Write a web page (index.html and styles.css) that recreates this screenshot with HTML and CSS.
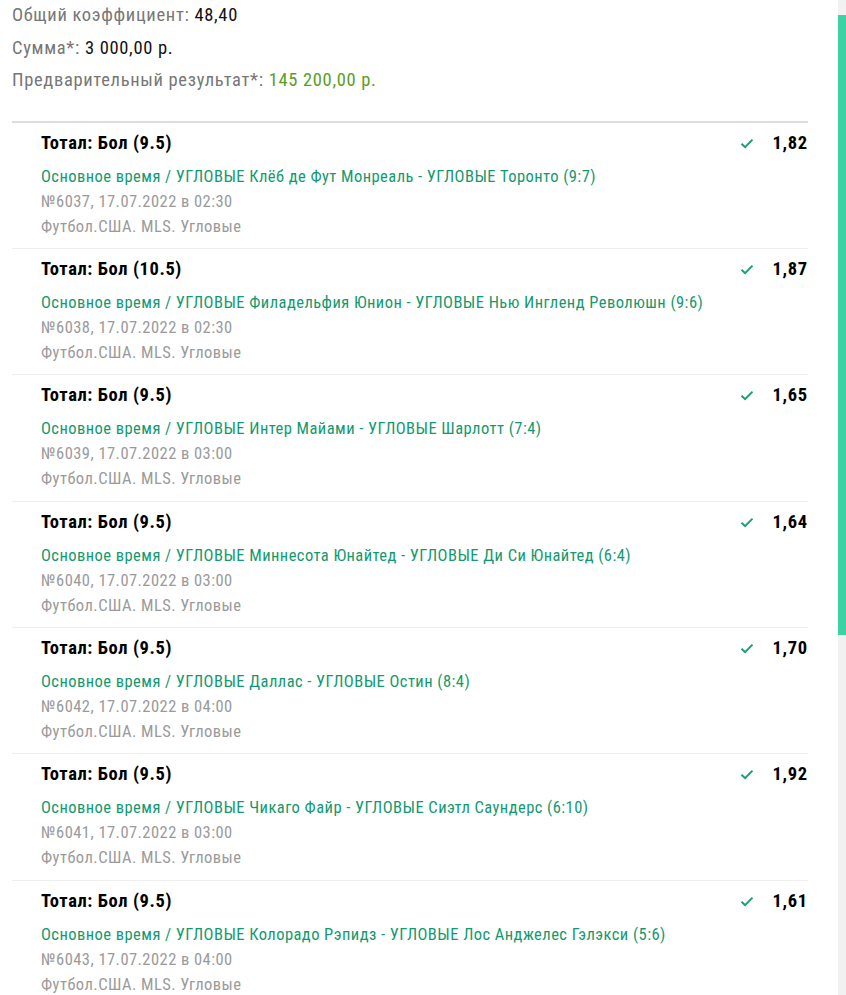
FILE: index.html
```html
<!DOCTYPE html>
<html lang="ru">
<head>
  <meta charset="UTF-8">
  <meta name="viewport" content="width=device-width, initial-scale=1.0">
  <title>Купон</title>
  <link rel="stylesheet" href="styles.css">
</head>
<body>
  <div class="coupon">
    <div class="summary">
      <div class="summary-line">Общий коэффициент: <span class="value">48,40</span></div>
      <div class="summary-line">Сумма*: <span class="value">3 000,00 р.</span></div>
      <div class="summary-line">Предварительный результат*: <span class="value win">145 200,00 р.</span></div>
    </div>

    <ul class="bets">
      <li class="bet">
        <div class="bet-head">
          <span class="bet-title">Тотал: Бол (9.5)</span>
          <span class="bet-odds"><svg class="check" viewBox="0 0 14 11"><path d="M1.5 5.8l3.6 3.4L12.5 1.6"/></svg>1,82</span>
        </div>
        <div class="bet-event">Основное время / УГЛОВЫЕ Клёб де Фут Монреаль - УГЛОВЫЕ Торонто (9:7)</div>
        <div class="bet-meta">№6037, 17.07.2022 в 02:30</div>
        <div class="bet-meta">Футбол.США. MLS. Угловые</div>
      </li>
      <li class="bet">
        <div class="bet-head">
          <span class="bet-title">Тотал: Бол (10.5)</span>
          <span class="bet-odds"><svg class="check" viewBox="0 0 14 11"><path d="M1.5 5.8l3.6 3.4L12.5 1.6"/></svg>1,87</span>
        </div>
        <div class="bet-event">Основное время / УГЛОВЫЕ Филадельфия Юнион - УГЛОВЫЕ Нью Ингленд Революшн (9:6)</div>
        <div class="bet-meta">№6038, 17.07.2022 в 02:30</div>
        <div class="bet-meta">Футбол.США. MLS. Угловые</div>
      </li>
      <li class="bet">
        <div class="bet-head">
          <span class="bet-title">Тотал: Бол (9.5)</span>
          <span class="bet-odds"><svg class="check" viewBox="0 0 14 11"><path d="M1.5 5.8l3.6 3.4L12.5 1.6"/></svg>1,65</span>
        </div>
        <div class="bet-event">Основное время / УГЛОВЫЕ Интер Майами - УГЛОВЫЕ Шарлотт (7:4)</div>
        <div class="bet-meta">№6039, 17.07.2022 в 03:00</div>
        <div class="bet-meta">Футбол.США. MLS. Угловые</div>
      </li>
      <li class="bet">
        <div class="bet-head">
          <span class="bet-title">Тотал: Бол (9.5)</span>
          <span class="bet-odds"><svg class="check" viewBox="0 0 14 11"><path d="M1.5 5.8l3.6 3.4L12.5 1.6"/></svg>1,64</span>
        </div>
        <div class="bet-event">Основное время / УГЛОВЫЕ Миннесота Юнайтед - УГЛОВЫЕ Ди Си Юнайтед (6:4)</div>
        <div class="bet-meta">№6040, 17.07.2022 в 03:00</div>
        <div class="bet-meta">Футбол.США. MLS. Угловые</div>
      </li>
      <li class="bet">
        <div class="bet-head">
          <span class="bet-title">Тотал: Бол (9.5)</span>
          <span class="bet-odds"><svg class="check" viewBox="0 0 14 11"><path d="M1.5 5.8l3.6 3.4L12.5 1.6"/></svg>1,70</span>
        </div>
        <div class="bet-event">Основное время / УГЛОВЫЕ Даллас - УГЛОВЫЕ Остин (8:4)</div>
        <div class="bet-meta">№6042, 17.07.2022 в 04:00</div>
        <div class="bet-meta">Футбол.США. MLS. Угловые</div>
      </li>
      <li class="bet">
        <div class="bet-head">
          <span class="bet-title">Тотал: Бол (9.5)</span>
          <span class="bet-odds"><svg class="check" viewBox="0 0 14 11"><path d="M1.5 5.8l3.6 3.4L12.5 1.6"/></svg>1,92</span>
        </div>
        <div class="bet-event">Основное время / УГЛОВЫЕ Чикаго Файр - УГЛОВЫЕ Сиэтл Саундерс (6:10)</div>
        <div class="bet-meta">№6041, 17.07.2022 в 03:00</div>
        <div class="bet-meta">Футбол.США. MLS. Угловые</div>
      </li>
      <li class="bet">
        <div class="bet-head">
          <span class="bet-title">Тотал: Бол (9.5)</span>
          <span class="bet-odds"><svg class="check" viewBox="0 0 14 11"><path d="M1.5 5.8l3.6 3.4L12.5 1.6"/></svg>1,61</span>
        </div>
        <div class="bet-event">Основное время / УГЛОВЫЕ Колорадо Рэпидз - УГЛОВЫЕ Лос Анджелес Гэлэкси (5:6)</div>
        <div class="bet-meta">№6043, 17.07.2022 в 04:00</div>
        <div class="bet-meta">Футбол.США. MLS. Угловые</div>
      </li>
    </ul>
  </div>

  <div class="scrollbar"><div class="scrollbar-thumb"></div></div>
</body>
</html>
```

FILE: styles.css
```css
* {
  margin: 0;
  padding: 0;
  box-sizing: border-box;
}
html, body {
  height: 100%;
  overflow: hidden;
}
body {
  font-family: 'Roboto Condensed', Roboto, sans-serif;
  font-size: 16.5px;
  letter-spacing: 0.45px;
  color: #000000;
  background: #ffffff;
}
.coupon {
  width: 808px;
  padding-left: 12px;
}
.summary {
  margin-top: -1px;
  margin-bottom: 24px;
}
.summary-line {
  color: #777777;
  font-size: 18.5px;
  letter-spacing: 0.68px;
  line-height: 32.5px;
}
.summary-line .value {
  color: #111111;
}
.summary-line .value.win {
  color: #5a9e1e;
}
.bets {
  list-style: none;
  border-top: 2px solid #dddddd;
}
.bet {
  padding: 8px 1px 9.4px 29px;
  border-bottom: 1px solid #eeeeee;
  line-height: 25px;
}
.bet-head {
  display: flex;
  justify-content: space-between;
  align-items: center;
  margin-bottom: 8px;
}
.bet-title {
  font-size: 18.5px;
  font-weight: 700;
  letter-spacing: 0.6px;
  color: #000000;
}
.bet-odds {
  display: flex;
  align-items: center;
  gap: 19px;
  font-size: 18.5px;
  font-weight: 700;
  letter-spacing: 0.6px;
  margin-right: -0.6px;
}
.check {
  width: 14px;
  height: 11px;
  fill: none;
  stroke: #1a9e72;
  stroke-width: 2;
}
.bet-event {
  color: #13996f;
}
.bet-meta {
  color: #9a9a9a;
}

/* полоса прокрутки списка */
.scrollbar {
  position: fixed;
  top: 0;
  right: 0;
  bottom: 0;
  width: 8px;
  background: #f1f1f1;
  padding-top: 15px;
}
.scrollbar-thumb {
  height: 620px;
  background: #3dd2a3;
}
```
